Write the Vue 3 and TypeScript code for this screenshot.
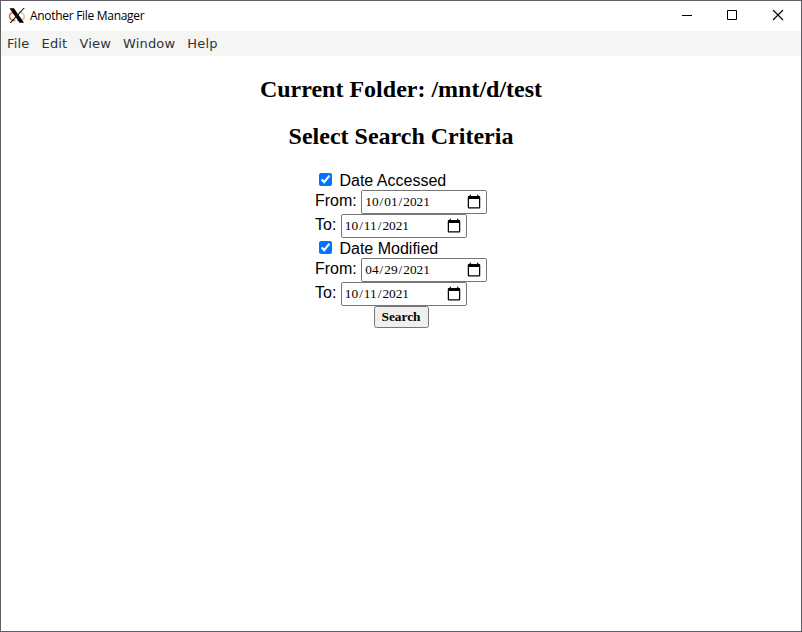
<script setup lang="ts">
import { reactive } from 'vue'

interface Criterion {
  label: string
  enabled: boolean
  from: string
  to: string
}

const menus: string[] = ['File', 'Edit', 'View', 'Window', 'Help']
const criteria = reactive<Criterion[]>([
  { label: 'Date Accessed', enabled: true, from: '2021-10-01', to: '2021-10-11' },
  { label: 'Date Modified', enabled: true, from: '2021-04-29', to: '2021-10-11' },
])
</script>

<template>
  <div class="window">
    <header class="titlebar">
      <svg class="logo" width="18" height="18" viewBox="0 0 18 18">
        <path d="M7 5C3.500 5.500 1.500 7.500 1.500 9.500C1.500 12 4.500 13.500 7.500 13.500" fill="none" stroke="#ec6a3c" stroke-width="1.700" />
        <path d="M11 5C14 5.500 16.300 7.500 16.300 9.500C16.300 12 13.500 13.500 9 13.500" fill="none" stroke="#f6b894" stroke-width="1.600" />
        <path d="M1.500 1.200h4.500l10 14.600h-4.500z" fill="#000" />
        <path d="M15.500 1h1.300L3 16H1.500z" fill="#111" />
      </svg>
      <span class="title">Another File Manager</span>
      <div class="controls">
        <svg width="46" height="30" viewBox="0 0 46 30"><path d="M19 14.500h10" stroke="#000" /></svg>
        <svg width="46" height="30" viewBox="0 0 46 30"><path d="M18.500 9.500h9v9h-9z" fill="none" stroke="#000" /></svg>
        <svg width="46" height="30" viewBox="0 0 46 30"><path d="M18 9l10 10M28 9l-10 10" stroke="#000" stroke-width="1.100" /></svg>
      </div>
    </header>
    <nav class="menubar">
      <span v-for="m in menus" :key="m">{{ m }}</span>
    </nav>
    <main>
      <h2>Current Folder: /mnt/d/test</h2>
      <h2>Select Search Criteria</h2>
      <form class="form" @submit.prevent>
        <section v-for="c in criteria" :key="c.label">
          <div><input v-model="c.enabled" type="checkbox"> <label>{{ c.label }}</label></div>
          <div><label>From: </label><input v-model="c.from" class="date" type="date"></div>
          <div><label>To: </label><input v-model="c.to" class="date" type="date"></div>
        </section>
        <button>Search</button>
      </form>
    </main>
  </div>
</template>

<style>
body { background: #fff; }
</style>
<style scoped>
.window { box-sizing: border-box; width: 802px; height: 632px; border: 1px solid #606066; overflow: hidden; }
.titlebar { display: flex; align-items: center; height: 30px; padding-left: 7px; font: 12px "Open Sans", sans-serif; letter-spacing: -0.3px; }
.title { margin-left: 4px; padding-bottom: 1px; color: #000; }
.controls { display: flex; margin-left: auto; }
.menubar { display: flex; gap: 12px; height: 25px; line-height: 25px; padding-left: 6px; background: #f5f5f4; font-family: "DejaVu Sans", sans-serif; font-size: 13px; letter-spacing: 0.18px; color: #2e3436; }
main { display: flex; flex-direction: column; align-items: center; font-family: "Liberation Serif", serif; }
h2 { margin: 20px 0 0; font-size: 24px; line-height: 27px; }
.form { display: flex; flex-direction: column; margin-top: 20px; width: 172px; font-family: "Liberation Sans", sans-serif; font-size: 16px; white-space: nowrap; }
.date { box-sizing: border-box; width: 126px; height: 24px; font-family: "Liberation Serif", serif; }
.date::-webkit-calendar-picker-indicator { width: 16px; height: 16px; padding: 2px; margin-right: 1px; }
button { align-self: center; font: bold 13.333px "Liberation Serif", serif; }
</style>
